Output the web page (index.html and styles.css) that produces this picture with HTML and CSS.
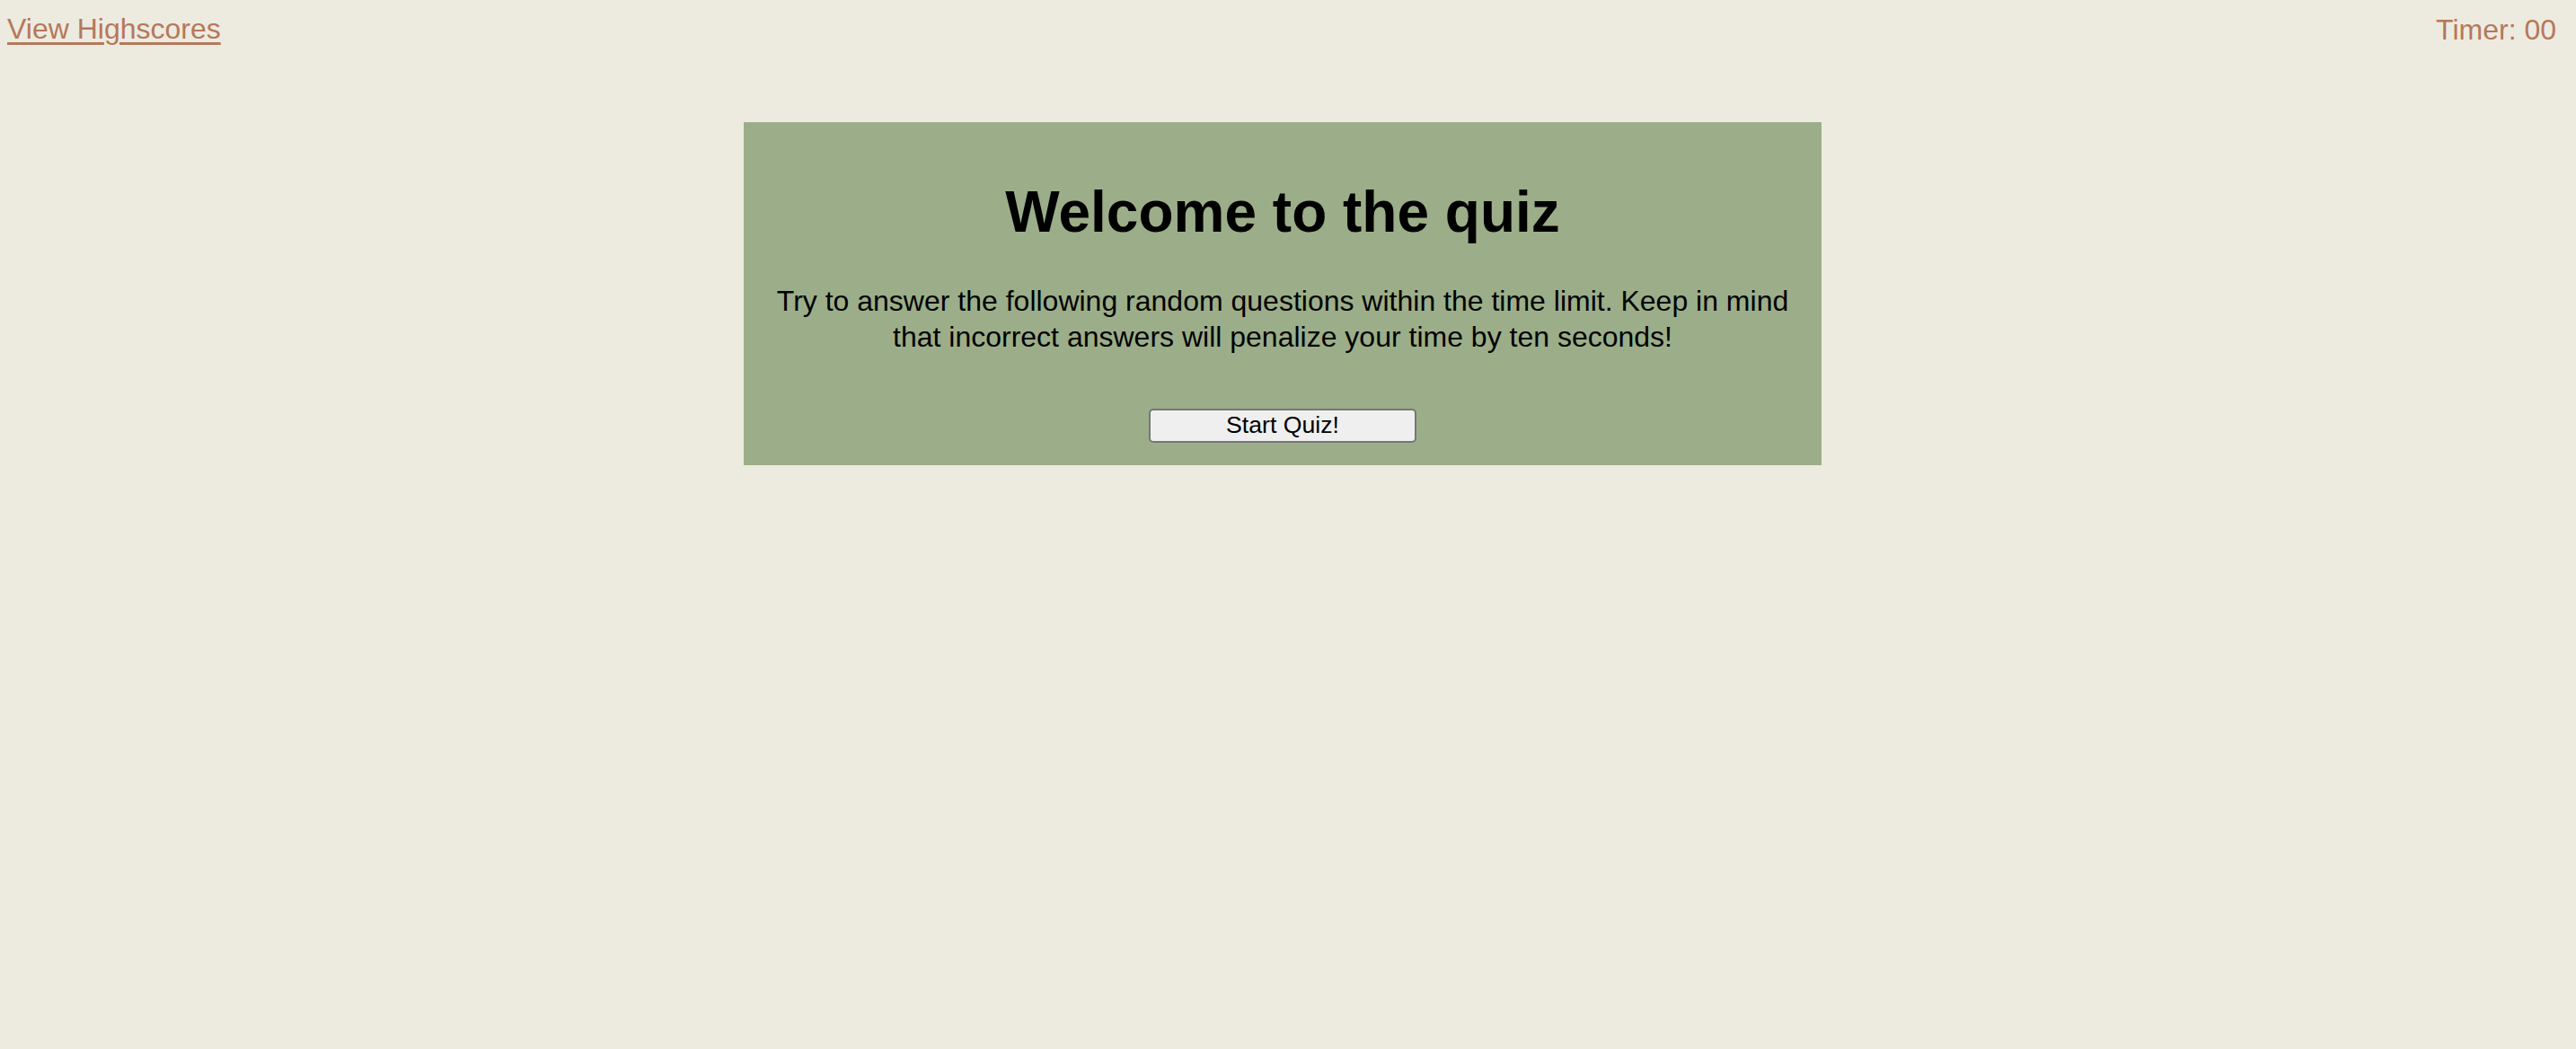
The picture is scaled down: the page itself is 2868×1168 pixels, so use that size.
FILE: index.html
```html
<!DOCTYPE html>
<html lang="en">
<head>
<meta charset="utf-8">
<title>Quiz</title>
<link rel="stylesheet" href="styles.css">
</head>
<body>
<header class="topbar">
  <a class="highscores" href="#">View Highscores</a>
  <div class="timer">Timer: 00</div>
</header>
<main class="stage">
  <section class="card">
    <h1 class="title">Welcome to the quiz</h1>
    <p class="intro">Try to answer the following random questions within the time limit. Keep in mind that incorrect answers will penalize your time by ten seconds!</p>
    <div class="actions">
      <button class="start" type="button">Start Quiz!</button>
    </div>
  </section>
</main>
</body>
</html>
```

FILE: styles.css
```css
html, body {
  margin: 0;
  padding: 0;
}
body {
  background: #edebdf;
  font-family: "Liberation Sans", Arial, sans-serif;
  color: #000;
  width: 2868px;
  height: 1168px;
  overflow: hidden;
}
.topbar {
  display: flex;
  justify-content: space-between;
  align-items: flex-start;
  padding: 14px 22px 0 8px;
  height: 136px;
  box-sizing: border-box;
}
.highscores {
  font-size: 32px;
  line-height: 36.8px;
  color: #b5785c;
  text-decoration: underline;
  text-decoration-thickness: 3px;
  text-underline-offset: 4px;
}
.timer {
  font-size: 32px;
  line-height: 36.8px;
  color: #b5785c;
  margin-top: 1px;
}
.stage {
  padding-right: 12px;
}
.card {
  width: 1200px;
  margin: 0 auto;
  background: #9cae89;
  padding: 64px 20px 25px;
  box-sizing: border-box;
  text-align: center;
}
.title {
  margin: 0;
  font-size: 64px;
  line-height: 73.6px;
  font-weight: bold;
}
.intro {
  margin: 41px 0 0;
  font-size: 32px;
  line-height: 40px;
}
.actions {
  margin-top: 60px;
}
.start {
  width: 298px;
  height: 38px;
  font-family: "Liberation Sans", Arial, sans-serif;
  font-size: 26.67px;
  color: #000;
  background: #efefef;
  border: 2px solid #767676;
  border-radius: 5px;
  padding: 0;
  line-height: 1;
}
```
